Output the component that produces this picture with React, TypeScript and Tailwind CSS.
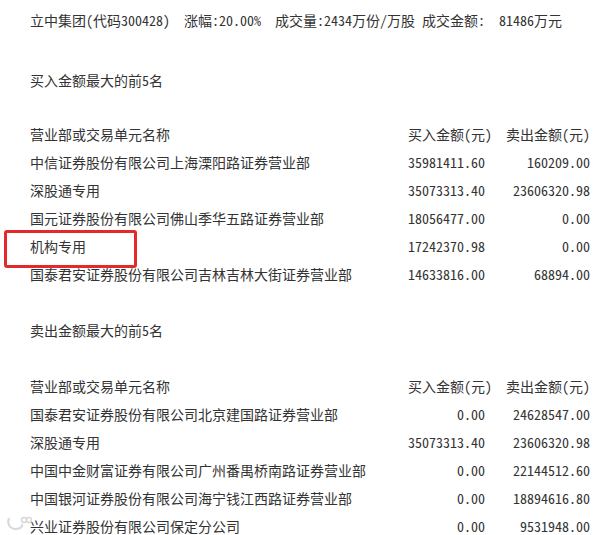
type Row = { name: string; buy: string; sell: string };

const buyTop: Row[] = [
  { name: '中信证券股份有限公司上海溧阳路证券营业部', buy: '35981411.60', sell: '160209.00' },
  { name: '深股通专用', buy: '35073313.40', sell: '23606320.98' },
  { name: '国元证券股份有限公司佛山季华五路证券营业部', buy: '18056477.00', sell: '0.00' },
  { name: '机构专用', buy: '17242370.98', sell: '0.00' },
  { name: '国泰君安证券股份有限公司吉林吉林大街证券营业部', buy: '14633816.00', sell: '68894.00' },
];

const sellTop: Row[] = [
  { name: '国泰君安证券股份有限公司北京建国路证券营业部', buy: '0.00', sell: '24628547.00' },
  { name: '深股通专用', buy: '35073313.40', sell: '23606320.98' },
  { name: '中国中金财富证券有限公司广州番禺桥南路证券营业部', buy: '0.00', sell: '22144512.60' },
  { name: '中国银河证券股份有限公司海宁钱江西路证券营业部', buy: '0.00', sell: '18894616.80' },
  { name: '兴业证券股份有限公司保定分公司', buy: '0.00', sell: '9531948.00' },
];

function Table({ rows }: { rows: Row[] }) {
  return (
    <div className="grid grid-cols-[1fr_84px_84px] gap-x-[14px] leading-[28px]">
      <div>营业部或交易单元名称</div>
      <div>买入金额(元)</div>
      <div>卖出金额(元)</div>
      {rows.map((r, i) => (
        <div key={i} className="contents">
          <div className="whitespace-nowrap">{r.name}</div>
          <div className="pr-[7px] text-right">{r.buy}</div>
          <div className="text-right">{r.sell}</div>
        </div>
      ))}
    </div>
  );
}

export default function App() {
  return (
    <div
      className="relative h-[535px] w-[603px] overflow-hidden bg-white pl-[30px] pr-[13px] pt-[6px] text-[14px] text-[#333]"
      style={{ fontFamily: '"Noto Sans Mono CJK SC", "Noto Sans CJK SC", monospace' }}
    >
      <div className="whitespace-pre leading-[28px]">
        {'立中集团(代码300428)  涨幅:20.00%  成交量:2434万份/万股 成交金额:  81486万元'}
      </div>

      <div className="mt-[32px] leading-[28px]">买入金额最大的前5名</div>
      <div className="mt-[26px]">
        <Table rows={buyTop} />
      </div>

      <div className="mt-[28px] leading-[28px]">卖出金额最大的前5名</div>
      <div className="mt-[28px]">
        <Table rows={sellTop} />
      </div>

      {/* annotation box */}
      <div className="absolute left-[4px] top-[230px] h-[38px] w-[133px] rounded-[3px] border-[3px] border-[#e5292b]" />

      {/* faint watermark */}
      <svg className="absolute left-[6px] top-[515px]" width="26" height="16" viewBox="0 0 26 16">
        <path d="M3 3 C1 8 3 14 10 14 C15 14 17 11 16 9" fill="none" stroke="#d8d8d8" strokeWidth="2" />
        <circle cx="18" cy="5" r="2.5" fill="none" stroke="#d8d8d8" strokeWidth="1.5" />
        <circle cx="23" cy="5" r="2.5" fill="none" stroke="#d8d8d8" strokeWidth="1.5" />
      </svg>
    </div>
  );
}
